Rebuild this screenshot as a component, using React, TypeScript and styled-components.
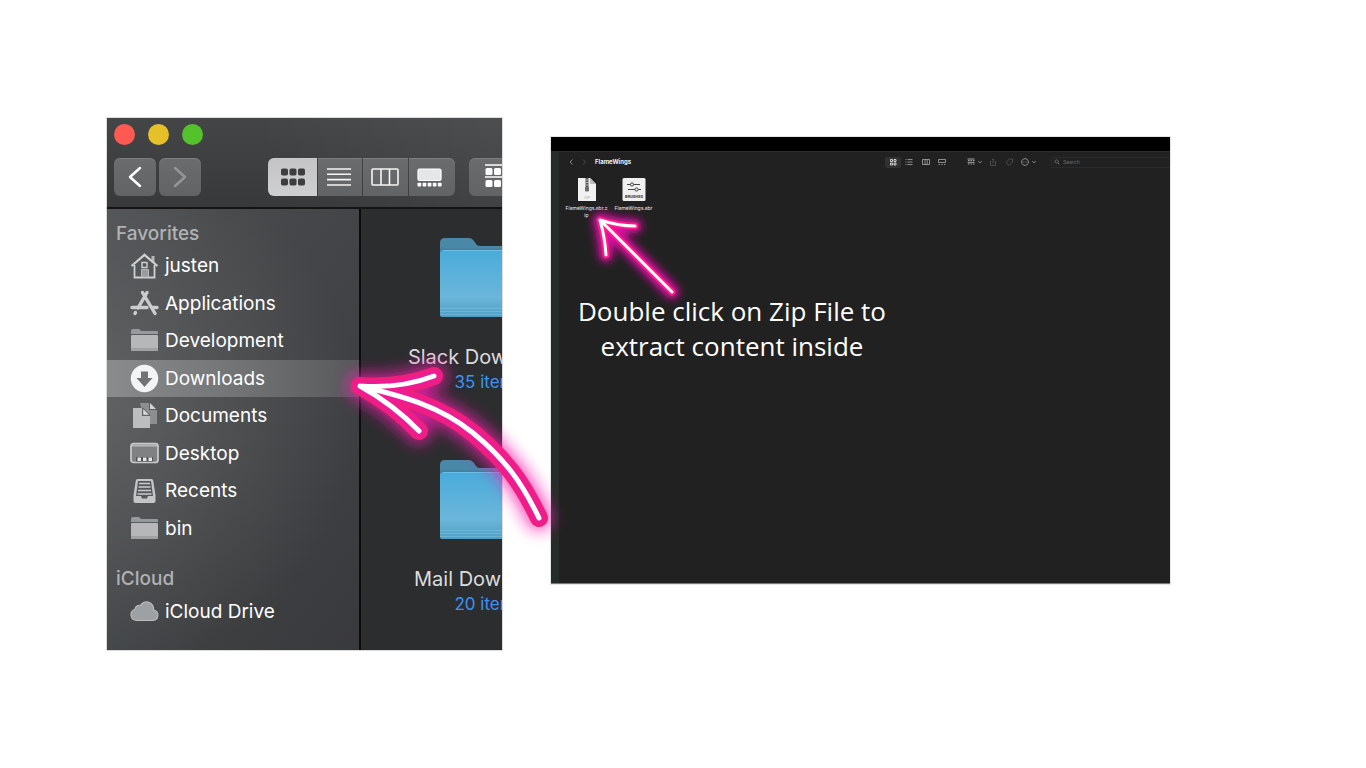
import React from "react";
import styled, { createGlobalStyle } from "styled-components";

const Global = createGlobalStyle`
  *, *::before, *::after { box-sizing: border-box; }
  body { margin: 0; background: #fff; }
  button { border: 0; padding: 0; background: none; color: inherit; font: inherit; }
  h1, h2, p, ul { margin: 0; padding: 0; }
`;

const ui = `Inter, "Liberation Sans", sans-serif`;

const Page = styled.main`
  display: grid;
  grid-template-columns: minmax(0, 395fr) minmax(0, 619fr);
  gap: 49px;
  align-items: start;
  padding: 118px 196px 118px 107px;
  font-family: ${ui};
`;

/* ---------- downloads window ---------- */

const Frame = styled.div`
  position: relative;
  z-index: 1;
`;

const FinderWindow = styled.section`
  overflow: hidden;
  background: #2c2d2f;
  box-shadow: 0 0 0 1px rgba(0, 0, 0, 0.14);
`;

const Titlebar = styled.header`
  height: 91px;
  padding: 6px 0 0 7px;
  border-bottom: 2px solid #141415;
  background: linear-gradient(75deg, rgba(255, 255, 255, 0) 40%, rgba(255, 255, 255, 0.05)),
    linear-gradient(#444546, #38393a);
`;

const Lights = styled.div`
  display: flex;
  gap: 13px;
`;

const Light = styled.button<{ $color: string }>`
  width: 21px;
  height: 21px;
  border-radius: 50%;
  background: ${(p) => p.$color};
`;

const Tools = styled.div`
  display: flex;
  margin-top: 13px;
`;

const ToolGroup = styled.div<{ $gap: number; $start: number }>`
  display: flex;
  flex: none;
  gap: ${(p) => p.$gap}px;
  margin-left: ${(p) => p.$start}px;
`;

const ToolButton = styled.button<{ $width?: number; $active?: boolean; $edge?: "left" | "right" | "none" }>`
  display: grid;
  place-items: center;
  width: ${(p) => p.$width ?? 42}px;
  height: 38px;
  border-radius: ${(p) =>
    p.$edge === "left" ? "6px 0 0 6px" : p.$edge === "right" ? "0 6px 6px 0" : p.$edge === "none" ? "0" : "6px"};
  background: ${(p) => (p.$active ? "linear-gradient(#c4c4c6, #cecfd1)" : "linear-gradient(#6b6c6e, #626365)")};
  box-shadow: inset 0 1px 0 rgba(255, 255, 255, 0.12);
`;

const Body = styled.div`
  display: grid;
  grid-template-columns: 254px minmax(0, 1fr);
`;

const Sidebar = styled.nav`
  min-height: 441px;
  padding-top: 14px;
  border-right: 2px solid #0c0c0d;
  background: radial-gradient(ellipse 250px 260px at 0 45%, rgba(124, 124, 126, 0.42), rgba(124, 124, 126, 0)),
    linear-gradient(rgba(255, 255, 255, 0.04), rgba(0, 0, 0, 0.06)),
    linear-gradient(90deg, #484b4d, #404244 45%, #3c3d40);
`;

const SectionTitle = styled.h2<{ $space?: number }>`
  margin-top: ${(p) => p.$space ?? 0}px;
  padding-left: 9px;
  font-size: 19px;
  line-height: 22px;
  font-weight: 500;
  color: #b0b2b4;
`;

const Places = styled.ul<{ $height: number }>`
  display: grid;
  grid-auto-rows: 1fr;
  height: ${(p) => p.$height}px;
  margin: 2px 0 12px;
  list-style: none;
`;

const Place = styled.a<{ $active?: boolean }>`
  display: flex;
  align-items: center;
  gap: 6px;
  height: 100%;
  padding-left: 23px;
  font-size: 19px;
  color: #fff;
  text-decoration: none;
  background: ${(p) => (p.$active ? "linear-gradient(90deg, #8a8b8c, #757779 45%, #57595b)" : "none")};
`;

const Tiles = styled.div`
  display: grid;
  align-content: start;
  grid-template-columns: 256px;
  row-gap: 36px;
  padding-top: 29px;
  overflow: hidden;
`;

const Tile = styled.figure`
  display: flex;
  flex-direction: column;
  align-items: center;
  height: 186px;
  margin: 0;
  line-height: 25px;
  white-space: nowrap;
`;

const TileName = styled.figcaption`
  margin-top: 27px;
  font-size: 20px;
  color: #dcdcdd;
`;

const TileCount = styled.p`
  font-size: 17px;
  color: #3d92f2;
`;

/* ---------- archive window ---------- */

const ArchiveWindow = styled.section`
  position: relative;
  display: grid;
  grid-template-columns: 8px minmax(0, 1fr);
  margin-top: 19px;
  border-top: 14px solid #000;
  border-bottom: 1px solid #777;
  background: #212121;
  box-shadow: 0 0 0 1px rgba(0, 0, 0, 0.1);
`;

const Strip = styled.div`
  background: #262c29;
`;

const Pane = styled.div`
  min-height: 432px;
`;

const PaneBar = styled.header`
  display: flex;
  align-items: center;
  height: 21px;
  padding-left: 6px;
  border-top: 1px solid #2d2d2d;
  color: #a9a9a9;
`;

const MiniButton = styled.button<{ $width: number; $start?: number; $on?: boolean }>`
  display: flex;
  flex: none;
  align-items: center;
  justify-content: center;
  gap: 2px;
  width: ${(p) => p.$width}px;
  height: 11px;
  margin-left: ${(p) => p.$start ?? 0}px;
  border-radius: 2px;
  background: ${(p) => (p.$on ? "#313131" : "none")};
  color: ${(p) => (p.$on ? "#f0f0f0" : "inherit")};
`;

const PaneTitle = styled.h1`
  margin-left: 4px;
  font-size: 6px;
  line-height: 8px;
  font-weight: 700;
  color: #f2f2f2;
`;

const MiniTools = styled.div`
  display: flex;
  margin-left: auto;
`;

const Search = styled.label`
  display: flex;
  align-items: center;
  gap: 3px;
  width: 119px;
  height: 11px;
  margin-left: 10px;
  padding-left: 2px;
  border: 1px solid #2b2b2b;
  border-right: 0;
  border-radius: 2px 0 0 2px;
`;

const SearchInput = styled.input`
  min-width: 0;
  flex: 1;
  height: 8px;
  padding: 0;
  border: 0;
  outline: 0;
  background: none;
  font: 5px/8px ${ui};
  color: #ccc;
  &::placeholder { color: #6c6c6c; }
`;

const Files = styled.div`
  display: flex;
  padding: 5px 0 0 4px;
`;

const FileItem = styled.figure`
  display: flex;
  flex-direction: column;
  align-items: center;
  width: 47px;
  height: 44px;
  margin: 0;
`;

const FileName = styled.figcaption`
  width: 42px;
  margin-top: 3px;
  font-size: 5px;
  line-height: 7px;
  text-align: center;
  word-break: break-all;
  color: #f0f0f0;
`;

const Caption = styled.p`
  width: 330px;
  margin: 73px 0 0 8px;
  font-family: "Open Sans", "Noto Sans", sans-serif;
  font-size: 26px;
  line-height: 35px;
  text-align: center;
  color: #fff;
`;

const BigArrow = styled.svg`
  position: absolute;
  top: 212px;
  right: -88px;
  pointer-events: none;
`;

const SmallArrow = styled.svg`
  position: absolute;
  top: 49px;
  left: 29px;
  pointer-events: none;
`;

/* ---------- drawings ---------- */

const FolderGlyph = () => (
  <svg width="29" height="25" viewBox="0 0 29 25">
    <path d="M1 7V3q0-2 2-2h6l2 2h16q1 0 1 1v3z" fill="#979a9c" />
    <rect x="1" y="7" width="27" height="16" rx="1" fill="#b5b7b9" />
    <path d="M1 20h27v2q0 1-1 1H2q-1 0-1-1z" fill="#a0a2a4" />
    <path d="M1 6.500h27" stroke="#5a5d60" />
  </svg>
);

const glyphs: Record<string, React.ReactNode> = {
  home: (
    <svg width="29" height="26" viewBox="0 0 29 26" fill="none" stroke="#cfd0d1">
      <path d="M21.500 3h3v7l-3-3z" fill="#b5b6b7" stroke="none" />
      <path d="M1.500 13 14.500 1.800 27.500 13" strokeWidth="2.200" />
      <path d="M4.500 12v12.500h20V12" strokeWidth="1.800" />
      <path d="M12 9.500h5v5h-5z" strokeWidth="1.400" />
      <path d="M11.500 24v-7.500h7V24z" fill="#999c9e" stroke="#b5b6b7" />
    </svg>
  ),
  apps: (
    <svg width="29" height="26" viewBox="0 0 29 26" fill="none" stroke="#cbccce" strokeWidth="3.400" strokeLinecap="round">
      <path d="M17 2.500 8 18M12.500 2.500 25 23.500M5.500 22.500 5 23.500" />
      <path d="M2 17.500h15M22 17.500h5" />
    </svg>
  ),
  folder: <FolderGlyph />,
  down: (
    <svg width="29" height="29" viewBox="0 0 29 29">
      <circle cx="14.500" cy="14.500" r="13.700" fill="#f3f4f5" />
      <path d="M11 7.500h7V14h4.500l-8 9-8-9H11z" fill="#717375" />
    </svg>
  ),
  docs: (
    <svg width="29" height="27" viewBox="0 0 29 27">
      <path d="M10 1h9v7h8v14H15z" fill="#8c8e90" />
      <path d="M20 1v6h6z" fill="#d2d3d4" />
      <path d="M3 6h9v8h8v12H3z" fill="#bcbdbf" />
      <path d="M12.700 6v7.300H20z" fill="#d8d9da" stroke="#54575a" strokeWidth="1" />
    </svg>
  ),
  desktop: (
    <svg width="29" height="22" viewBox="0 0 29 22">
      <rect x="1" y="1.500" width="27" height="19" rx="2.500" fill="#7f8183" stroke="#cbccce" strokeWidth="1.700" />
      <path d="M2 3.500h25" stroke="#b7b9bb" strokeWidth="2" />
      <path d="M6 15h17v4.500H6z" fill="#505255" />
      <path d="M7.500 15.500h3.500v3.500H7.500zM13 15.500h3.500v3.500H13zM18.500 15.500H22v3.500h-3.500z" fill="#e4e5e6" />
    </svg>
  ),
  recents: (
    <svg width="29" height="26" viewBox="0 0 29 26">
      <path d="M7.500 1h14q1.500 0 1.700 1.500L25.500 17v6q0 2-2 2h-18q-2 0-2-2v-6L5.800 2.500Q6 1 7.500 1z" fill="#c3c5c7" />
      <path d="M8 3h13l2 15h-5l-1 2.500h-5L11 18H6z" fill="#55585b" />
      <path d="M9 5.500h11M8.500 9h12M8 12.500h13M7.500 16h14" stroke="#c9cacc" strokeWidth="1.600" />
    </svg>
  ),
  cloud: (
    <svg width="29" height="21" viewBox="0 0 29 21">
      <path d="M6.500 19.500A5.800 5.800 0 0 1 5 8.200a4.200 4.200 0 0 1 5.500-3.700A7 7 0 0 1 23.500 9a5.300 5.300 0 0 1-.5 10.500z" fill="#9ea1a3" stroke="#b8babc" strokeWidth="1.200" />
    </svg>
  ),
};

const BlueFolder = () => (
  <svg width="98" height="80" viewBox="0 0 98 80">
    <defs>
      <linearGradient id="face" x2="0" y2="1">
        <stop offset="0" stopColor="#49abda" />
        <stop offset="0.700" stopColor="#6bb6da" />
        <stop offset="1" stopColor="#4f9fc4" />
      </linearGradient>
    </defs>
    <path d="M0 16V5q0-5 5-5h24q3 0 5 3l2 3q1 2 4 2h53q5 0 5 5v5H0z" fill="#4a88a8" />
    <path d="M0 12h98" stroke="#3d7897" strokeWidth="3" opacity="0.500" />
    <path d="M0 77V16q0-4 4-4h90q4 0 4 4v61q0 2-2 2H2q-2 0-2-2z" fill="url(#face)" />
    <path d="M3 12.500h92" stroke="#8acbea" opacity="0.600" />
    <path d="M0 70.500h98M0 73.500h98M0 76.500h98" stroke="#7cc0de" opacity="0.600" />
  </svg>
);

const Chevron = ({ flip, dim }: { flip?: boolean; dim?: boolean }) => (
  <svg width="14" height="22" viewBox="0 0 14 22" fill="none" stroke={dim ? "#949597" : "#fff"} strokeWidth="2.500" strokeLinecap="round" strokeLinejoin="round">
    <path d={flip ? "M2 2l10 9-10 9" : "M12 2 2 11l10 9"} />
  </svg>
);

const squares = (xs: number[], ys: number[], w: number, h: number, r: number) =>
  ys.flatMap((y) => xs.map((x) => <rect key={`${x}-${y}`} x={x} y={y} width={w} height={h} rx={r} />));

const GridIcon = () => (
  <svg width="26" height="18" viewBox="0 0 26 18" fill="#3c3d3f">{squares([1, 9.500, 18], [0.500, 10.500], 7, 7, 1.800)}</svg>
);
const ListIcon = () => (
  <svg width="26" height="18" viewBox="0 0 26 18" stroke="#f5f5f5" strokeWidth="1.600"><path d="M0 1h24M0 6.300h24M0 11.600h24M0 17h24" /></svg>
);
const ColumnsIcon = () => (
  <svg width="30" height="18" viewBox="0 0 30 18" fill="none" stroke="#f5f5f5" strokeWidth="1.600">
    <rect x="1" y="1" width="26" height="16" rx="1" />
    <path d="M10 1v16M18.500 1v16" />
  </svg>
);
const GalleryIcon = () => (
  <svg width="30" height="19" viewBox="0 0 30 19" fill="#fff">
    <rect x="1" y="1" width="23" height="11.500" rx="1.500" fill="#e5e6e8" stroke="#fff" strokeWidth="1.200" />
    {squares([0.500, 5.600, 10.700, 15.800, 20.900], [14.800], 3.700, 3.700, 0.800)}
  </svg>
);
const GroupIcon = () => (
  <svg width="28" height="26" viewBox="0 0 28 26" fill="#fff">
    <path d="M0 1h26M0 13h26" stroke="#fff" strokeWidth="1.500" />
    {squares([0.500, 9, 17.500], [4, 16], 7, 7, 1.500)}
  </svg>
);

type MiniName = "back" | "next" | "grid" | "list" | "cols" | "gallery" | "group" | "caret" | "share" | "tag" | "more" | "find";
const miniPaths: Record<MiniName, React.ReactNode> = {
  back: <path d="M5.500 1.500 3 4l2.500 2.500" />,
  next: <path d="M3 1.500 5.500 4 3 6.500" />,
  grid: <path d="M1.500 1.500h2v2h-2zM5 1.500h2v2H5zM1.500 5h2v2h-2zM5 5h2v2H5z" />,
  list: <path d="M.5 1.500h1M.5 4h1M.5 6.500h1M2.500 1.500h5M2.500 4h5M2.500 6.500h5" />,
  cols: <path d="M.5 1.500h7v5h-7zM3 1.500v5M5.200 1.500v5" />,
  gallery: <path d="M.5 1.500h7v3h-7zM.5 6.500h1.500M3.300 6.500h1.500M6 6.500h1.500" />,
  group: <path d="M.5 1h7M.5 4.300h7M1 2.500h1.500M3.500 2.500h1.500M6 2.500h1.500M1 6h1.500M3.500 6h1.500M6 6h1.500" strokeWidth="1" />,
  caret: <path d="M2 3 4 5l2-2" strokeWidth="1.300" />,
  share: <path d="M2.500 3.500h-1v4h5v-4h-1M4 5.500V.8M3 1.800l1-1 1 1" />,
  tag: <path d="M4.500 1h3v3l-3.500 3.500L.8 4.500z" />,
  more: <path d="M4 .6a3.400 3.400 0 1 0 .01 0M2.200 4h.6M3.700 4h.6M5.200 4h.6" />,
  find: <path d="M3.500 1.200a2.200 2.200 0 1 0 .01 0M5.200 5.200l2 2" />,
};
const Mini = ({ name, color = "currentColor", size = 8 }: { name: MiniName; color?: string; size?: number }) => (
  <svg width={size} height={size} viewBox="0 0 8 8" fill="none" stroke={color} strokeWidth="0.800">{miniPaths[name]}</svg>
);

const ZipIcon = () => (
  <svg width="18" height="25" viewBox="0 0 18 25">
    <path d="M0 1h12l6 6v17H0z" fill="#f1f1f1" />
    <path d="M12 1v6h6z" fill="#bdbdbd" />
    <path d="M7.500 1h3v11h-3z" fill="#555" />
    <path d="M7.500 3h3M7.500 5.500h3M7.500 8h3" stroke="#c8c8c8" strokeWidth="0.800" />
    <rect x="7" y="10" width="4" height="4.500" rx="1" fill="#6c6c6c" />
    <text x="9" y="22" textAnchor="middle" fontSize="4" fontFamily="Inter" fill="#aaa">ZIP</text>
  </svg>
);

const BrushIcon = () => (
  <svg width="24" height="25" viewBox="0 0 24 25">
    <rect x="0.500" y="1" width="23" height="23" rx="1.500" fill="#f0f0f0" />
    <g fill="#f0f0f0" stroke="#333" strokeWidth="0.900">
      <path d="M5 7.500h13M6 12.500h13" />
      <circle cx="10" cy="7.500" r="1.600" />
      <circle cx="14.500" cy="12.500" r="1.600" />
    </g>
    <text x="12" y="21" textAnchor="middle" fontSize="4" fontWeight="700" fontFamily="Roboto" fill="#333">BRUSHES</text>
  </svg>
);

const bigStrokes = "M40 56Q80 59 114 46M40 56Q74 75 99 101M40 56C82 66 120 76 153 103S202 153 219 188";
const smallStrokes = "M20 20Q38 26 55 26M20 20Q25 38 26 55M20 20 92 92";

/* ---------- page ---------- */

const favorites = [
  ["justen", "home"],
  ["Applications", "apps"],
  ["Development", "folder"],
  ["Downloads", "down"],
  ["Documents", "docs"],
  ["Desktop", "desktop"],
  ["Recents", "recents"],
  ["bin", "folder"],
];

const PlaceList = ({ items, height }: { items: string[][]; height: number }) => (
  <Places $height={height}>
    {items.map(([label, glyph]) => (
      <li key={label}>
        <Place href="#" $active={label === "Downloads"}>
          {glyphs[glyph]}
          {label}
        </Place>
      </li>
    ))}
  </Places>
);

export default function App() {
  return (
    <Page>
      <Global />
      <Frame>
        <FinderWindow>
          <Titlebar>
            <Lights>
              <Light $color="#ff5a52" aria-label="Close" />
              <Light $color="#e6c029" aria-label="Minimize" />
              <Light $color="#54c22b" aria-label="Zoom" />
            </Lights>
            <Tools>
              <ToolGroup $gap={3} $start={0}>
                <ToolButton aria-label="Back"><Chevron /></ToolButton>
                <ToolButton aria-label="Forward"><Chevron flip dim /></ToolButton>
              </ToolGroup>
              <ToolGroup $gap={1} $start={67}>
                <ToolButton $width={49} $active $edge="left" aria-label="Icons"><GridIcon /></ToolButton>
                <ToolButton $width={44} $edge="none" aria-label="List"><ListIcon /></ToolButton>
                <ToolButton $width={45} $edge="none" aria-label="Columns"><ColumnsIcon /></ToolButton>
                <ToolButton $width={46} $edge="right" aria-label="Gallery"><GalleryIcon /></ToolButton>
              </ToolGroup>
              <ToolGroup $gap={0} $start={14}>
                <ToolButton $width={60} aria-label="Group"><GroupIcon /></ToolButton>
              </ToolGroup>
            </Tools>
          </Titlebar>
          <Body>
            <Sidebar>
              <SectionTitle>Favorites</SectionTitle>
              <PlaceList items={favorites} height={300} />
              <SectionTitle $space={21}>iCloud</SectionTitle>
              <PlaceList items={[["iCloud Drive", "cloud"]]} height={38} />
            </Sidebar>
            <Tiles>
              <Tile>
                <BlueFolder />
                <TileName>Slack Downloads</TileName>
                <TileCount>35 items</TileCount>
              </Tile>
              <Tile>
                <BlueFolder />
                <TileName>Mail Downloads</TileName>
                <TileCount>20 items</TileCount>
              </Tile>
            </Tiles>
          </Body>
        </FinderWindow>
        <BigArrow width="270" height="240" viewBox="0 0 270 240" fill="none" strokeLinecap="round" strokeLinejoin="round" aria-hidden="true">
          <defs>
            <filter id="bigGlow" x="-20%" y="-20%" width="140%" height="140%"><feGaussianBlur stdDeviation="8" /></filter>
          </defs>
          <path d={bigStrokes} stroke="#f71cb0" strokeWidth="25" filter="url(#bigGlow)" opacity="0.800" />
          <path d={bigStrokes} stroke="#f01f7c" strokeWidth="18" />
          <path d={bigStrokes} stroke="#ed1c94" strokeWidth="12" />
          <path d={bigStrokes} stroke="#fff" strokeWidth="5" />
        </BigArrow>
      </Frame>

      <ArchiveWindow>
        <Strip />
        <Pane>
          <PaneBar>
            <MiniButton $width={11} aria-label="Back"><Mini name="back" /></MiniButton>
            <MiniButton $width={15} aria-label="Forward"><Mini name="next" color="#5a5a5a" /></MiniButton>
            <PaneTitle>FlameWings</PaneTitle>
            <MiniTools>
              <MiniButton $width={16} $on aria-label="Icons"><Mini name="grid" /></MiniButton>
              <MiniButton $width={16} aria-label="List"><Mini name="list" /></MiniButton>
              <MiniButton $width={17} aria-label="Columns"><Mini name="cols" /></MiniButton>
              <MiniButton $width={16} aria-label="Gallery"><Mini name="gallery" /></MiniButton>
              <MiniButton $width={21} $start={14} aria-label="Group"><Mini name="group" /><Mini name="caret" size={6} /></MiniButton>
              <MiniButton $width={16} aria-label="Share"><Mini name="share" color="#585858" /></MiniButton>
              <MiniButton $width={16} aria-label="Tags"><Mini name="tag" color="#585858" /></MiniButton>
              <MiniButton $width={24} aria-label="More"><Mini name="more" /><Mini name="caret" size={6} /></MiniButton>
            </MiniTools>
            <Search aria-label="Search">
              <Mini name="find" size={6} color="#999" />
              <SearchInput placeholder="Search" />
            </Search>
          </PaneBar>
          <Files>
            <FileItem>
              <ZipIcon />
              <FileName>FlameWings.abr.zip</FileName>
            </FileItem>
            <FileItem>
              <BrushIcon />
              <FileName>FlameWings.abr</FileName>
            </FileItem>
          </Files>
          <Caption>Double click on Zip File to extract content inside</Caption>
        </Pane>
        <SmallArrow width="120" height="115" viewBox="0 0 120 115" fill="none" strokeLinecap="round" strokeLinejoin="round" aria-hidden="true">
          <defs>
            <filter id="smallGlow" x="-20%" y="-20%" width="140%" height="140%"><feGaussianBlur stdDeviation="4" /></filter>
          </defs>
          <path d={smallStrokes} stroke="#e010a4" strokeWidth="14" filter="url(#smallGlow)" />
          <path d={smallStrokes} stroke="#ff1a88" strokeWidth="7" />
          <path d={smallStrokes} stroke="#fff" strokeWidth="3" />
        </SmallArrow>
      </ArchiveWindow>
    </Page>
  );
}
